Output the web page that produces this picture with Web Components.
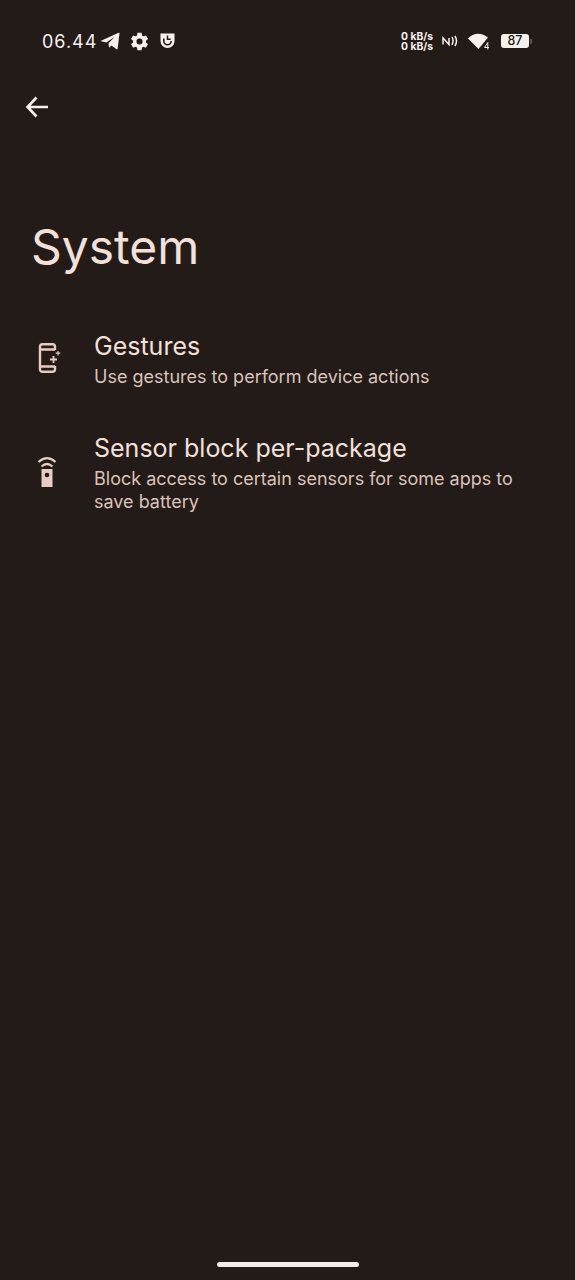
<!DOCTYPE html>
<html>
<head>
<meta charset="utf-8">
<title>System</title>
<style>
    html, body { margin: 0; padding: 0; background: #231b17; }
    body { font-family: Inter, "Liberation Sans", sans-serif; overflow: hidden; }
    settings-page { height: 1280px; }
</style>
</head>
<body>
<settings-page>
    <status-bar></status-bar>
    <back-bar></back-bar>
    <page-title>System</page-title>
    <settings-item icon="gestures" title="Gestures">Use gestures to perform device actions</settings-item>
    <settings-item icon="sensor" title="Sensor block per-package">Block access to certain sensors for some apps to save battery</settings-item>
    <nav-pill></nav-pill>
</settings-page>
<script>
class settingsPage extends HTMLElement {
    constructor(){
        super();
        this.attachShadow({ mode: "open" });
        this.shadowRoot.innerHTML = `
        <style>
            :host{
                display: flex;
                flex-direction: column;
                background: #231b17;
            }
        </style>
        <slot></slot>`;
    }
}
customElements.define('settings-page', settingsPage);

class statusBar extends HTMLElement {
    constructor(){
        super();
        this.attachShadow({ mode: "open" });
        this.shadowRoot.innerHTML = `
        <style>
            :host{
                display: flex;
                justify-content: space-between;
                align-items: center;
                height: 24px;
                padding: 29px 43px 0 42px;
                color: #f7f1ee;
            }
            .side{ display: flex; align-items: center; }
            .time{ font-size: 18px; font-weight: 400; letter-spacing: 1px; margin-right: 3px; }
            .speed{
                font-size: 10.300px;
                line-height: 10px;
                font-weight: 700;
                text-align: center;
                margin-right: 9px;
            }
            .batt{
                width: 28px;
                height: 14px;
                box-sizing: border-box;
                margin-left: 11px;
                background: #f7f1ee;
                border-radius: 3px;
                color: #231b17;
                font-size: 12.500px;
                font-weight: 500;
                line-height: 14px;
                text-align: center;
            }
            .tip{ width: 2px; height: 5px; background: #5b5450; margin-left: 1px; border-radius: 0 1px 1px 0; }
            svg{ display: block; flex: none; }
        </style>
        <div class="side">
            <span class="time">06.44</span>
            <svg width="20" height="18" viewBox="0 0 20 18" fill="#f7f1ee"><path d="M.5 9 18.600.8c.6-.2 1 .2.9.8l-1.900 15.200c-.1.6-.6.7-1 .4l-5.200-3.800-2.300 2.400-.6-4.600 6-6.200-8.200 5.500z"/></svg>
            <svg style="margin-left:9px" width="21" height="21" viewBox="0 0 24 24" fill="#f7f1ee"><path d="M19.400 13a7.600 7.600 0 0 0 0-2l2.400-1.800-2.400-4.200-2.800 1.100a7.500 7.500 0 0 0-1.700-1L14.400 2H9.600l-.4 3.100a7.500 7.500 0 0 0-1.700 1L4.700 5 2.300 9.200 4.700 11a7.600 7.600 0 0 0 0 2l-2.400 1.800L4.700 19l2.800-1.100c.5.400 1.100.7 1.700 1l.4 3.100h4.800l.4-3.100c.6-.3 1.200-.6 1.700-1l2.800 1.100 2.400-4.200zM12 15.500a3.500 3.500 0 1 1 0-7 3.500 3.500 0 0 1 0 7z"/></svg>
            <svg style="margin-left:10px" width="15" height="16" viewBox="0 0 15 16"><path d="M.5.500h14v7.500a7 7 0 0 1-14 0z" fill="#f7f1ee"/><path d="M3.800 5.500v2.500a3.700 3.700 0 0 0 7.400 0" fill="none" stroke="#231b17" stroke-width="1.600"/><path d="M7.500 2.500v3.800h3.200" fill="none" stroke="#231b17" stroke-width="1.500"/></svg>
        </div>
        <div class="side">
            <div class="speed">0 kB/s<br>0 kB/s</div>
            <svg width="17" height="12" viewBox="0 0 17 12" fill="none" stroke="#f7f1ee" stroke-width="1.500"><path d="M1 9.500V3l6 6.500V3"/><path d="M10 2c1.300 2.500 1.300 5.500 0 8M13 1c1.800 3 1.800 7 0 10"/></svg>
            <svg style="margin-left:9px" width="22" height="17" viewBox="0 0 22 17"><path d="M0 5.500C5-.8 14-.8 20 4.500L10.500 16z" fill="#f7f1ee"/><path d="M16.500 14.500h4.500M19.800 9.500l-3.300 5M19.800 9.500v7" fill="none" stroke="#f7f1ee" stroke-width="1"/></svg>
            <span class="batt">87</span>
            <span class="tip"></span>
        </div>`;
    }
}
customElements.define('status-bar', statusBar);

class backBar extends HTMLElement {
    constructor(){
        super();
        this.attachShadow({ mode: "open" });
        this.shadowRoot.innerHTML = `
        <style>
            :host{
                display: block;
                padding: 42px 0 0 25px;
                height: 24px;
            }
            svg{ display: block; }
        </style>
        <svg width="24" height="24" viewBox="0 0 24 24" fill="none" stroke="#f7f1ee" stroke-width="2.600"><path d="M23 12H2.500M11.500 2.500 2.500 12l9 9.500"/></svg>`;
    }
}
customElements.define('back-bar', backBar);

class pageTitle extends HTMLElement {
    constructor(){
        super();
        this.attachShadow({ mode: "open" });
        this.shadowRoot.innerHTML = `
        <style>
            :host{
                display: block;
                padding: 100px 0 0 31px;
                height: 111px;
                font-size: 48px;
                line-height: 56px;
                font-weight: 400;
                color: #f2e0d9;
            }
        </style>
        <slot></slot>`;
    }
}
customElements.define('page-title', pageTitle);

const itemIcons = {
    gestures: `<svg width="24" height="30" viewBox="0 0 24 30" style="margin:0 0 3px 1px" fill="none" stroke="#e6ccc2" stroke-width="2.400"><path d="M17 7V3.500A2.500 2.500 0 0 0 14.500 1.200h-10A2.500 2.500 0 0 0 2 3.500v23a2.500 2.500 0 0 0 2.500 2.300h10a2.500 2.500 0 0 0 2.500-2.300V23"/><path d="M2 6.500h15M2 23.500h15"/><path d="M15.500 13v7M12 16.500h7" stroke-width="1.800"/><path d="M20 8v4.500M17.700 10.200h4.600" stroke-width="1.200"/></svg>`,
    sensor: `<svg width="26" height="32" viewBox="0 0 26 32" style="margin:0 0 4px -1px"><path d="M2.500 7C8 2 14 2 19.500 7M5.500 11.500c3.500-3.200 7.500-3.200 11 0" fill="none" stroke="#e6ccc2" stroke-width="2.200"/><path d="M5.500 14h11v18h-11z" fill="#e6ccc2"/><circle cx="11" cy="20" r="2.300" fill="#231b17"/></svg>`
};

class settingsItem extends HTMLElement {
    constructor(){
        super();
        this.attachShadow({ mode: "open" });
    }
    connectedCallback(){
        this.shadowRoot.innerHTML = `
        <style>
            :host{
                display: flex;
                align-items: center;
                padding: 0 32px 0 37px;
                margin-bottom: 44px;
            }
            .icon{ width: 57px; flex: none; display: flex; }
            .title{
                font-size: 25px;
                line-height: 32px;
                color: #f2e0d9;
            }
            .sub{
                margin-top: 3px;
                font-size: 18px;
                line-height: 23px;
                color: #d9c3ba;
            }
        </style>
        <div class="icon">${itemIcons[this.getAttribute("icon")]}</div>
        <div>
            <div class="title">${this.getAttribute("title")}</div>
            <div class="sub"><slot></slot></div>
        </div>`;
    }
}
customElements.define('settings-item', settingsItem);

class navPill extends HTMLElement {
    constructor(){
        super();
        this.attachShadow({ mode: "open" });
        this.shadowRoot.innerHTML = `
        <style>
            :host{
                display: block;
                width: 142px;
                height: 5px;
                margin: auto auto 13px;
                border-radius: 3px;
                background: #f3ece8;
            }
        </style>`;
    }
}
customElements.define('nav-pill', navPill);
</script>
</body>
</html>
